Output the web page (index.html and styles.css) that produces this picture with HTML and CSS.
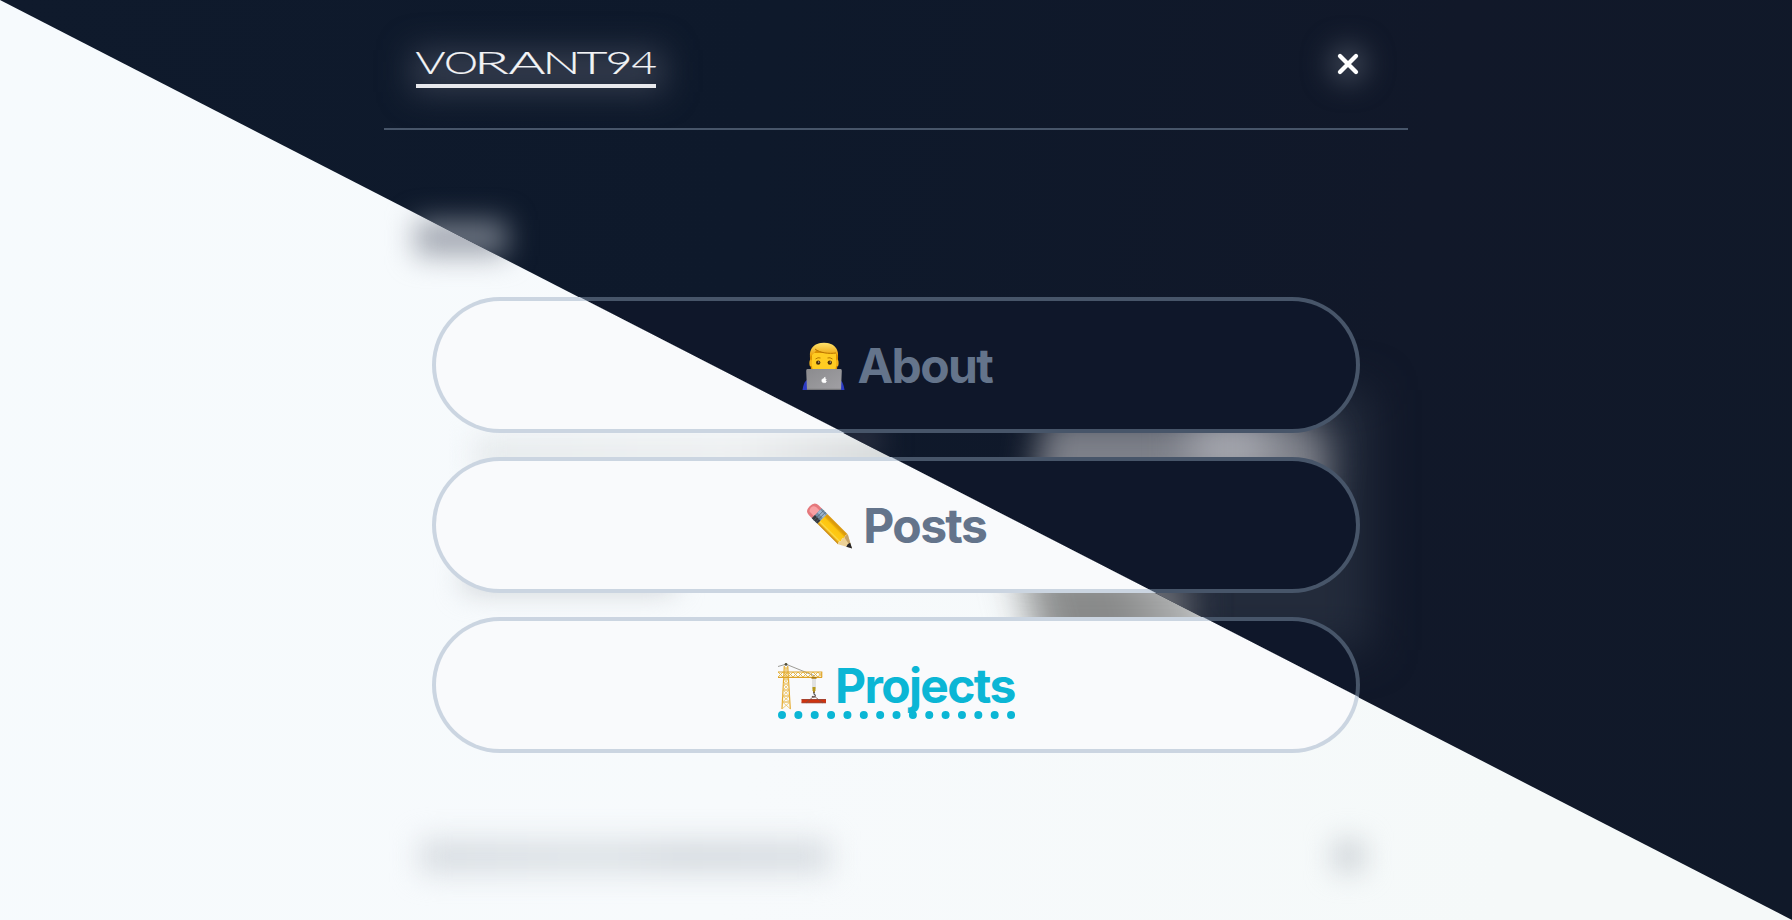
FILE: index.html
```html
<!DOCTYPE html>
<html lang="en">
<head>
<meta charset="utf-8">
<title>VORANT94</title>
<link rel="stylesheet" href="styles.css">
</head>
<body>
<div class="backdrop light">
  <i class="blob title"></i>
  <i class="blob card"></i>
  <i class="blob card-top"></i>
  <i class="blob photo"></i>
  <i class="blob footer-text"></i>
  <i class="blob footer-icon"></i>
</div>
<div class="backdrop dark">
  <i class="blob logo-glow"></i>
  <i class="blob close-glow"></i>
  <i class="blob title"></i>
  <i class="blob edge"></i>
  <i class="blob card-end"></i>
  <i class="blob photo-top"></i>
  <i class="blob photo-shine"></i>
  <i class="blob photo-low"></i>
</div>
<div class="page">
  <header class="header">
    <a class="logo">
      <svg width="240" height="25" viewBox="0 0 240 25"><text class="wordmark" y="23.200"><tspan x="-.5" textLength="30" lengthAdjust="spacingAndGlyphs">V</tspan><tspan x="28" textLength="34" lengthAdjust="spacingAndGlyphs">O</tspan><tspan x="58" textLength="35" lengthAdjust="spacingAndGlyphs">R</tspan><tspan x="92.500" textLength="37" lengthAdjust="spacingAndGlyphs">A</tspan><tspan x="126.500" textLength="38" lengthAdjust="spacingAndGlyphs">N</tspan><tspan x="160.500" textLength="31" lengthAdjust="spacingAndGlyphs">T</tspan><tspan x="189.500" textLength="27" lengthAdjust="spacingAndGlyphs">9</tspan><tspan x="215.500" textLength="25.500" lengthAdjust="spacingAndGlyphs">4</tspan></text></svg>
    </a>
    <button class="close" aria-label="Close">
      <svg width="32" height="32" viewBox="0 0 32 32"><path d="M8 8 24 24M24 8 8 24"/></svg>
    </button>
  </header>
  <nav class="nav">
    <a class="item"><span class="label">
      <svg class="emoji" width="48" height="48" viewBox="0 0 48 48">
        <defs>
          <linearGradient id="hair" x1="0" y1="0" x2="0" y2="1"><stop offset="0" stop-color="#ffe36b"/><stop offset="1" stop-color="#e99a00"/></linearGradient>
          <linearGradient id="lap" x1="0" y1="0" x2="1" y2="1"><stop offset="0" stop-color="#8b8b8e"/><stop offset="1" stop-color="#a1a0a4"/></linearGradient>
        </defs>
        <path d="M2.500 48c1-6 2-9 6-11h30c4 2 5 5 6 11z" fill="#2c3bc4"/>
        <path d="M10 18C9 7 15 1 24 1s15 6 14 17l-1 9H11z" fill="#dc9100"/>
        <ellipse cx="10.800" cy="21" rx="1.400" ry="3.600" fill="#f5b416"/><ellipse cx="37.200" cy="21" rx="1.400" ry="3.600" fill="#f5b416"/>
        <path d="M12 11h24v13c0 6-5 9-12 9s-12-3-12-9z" fill="#ffcc22"/>
        <path d="M10 15C9 6 15 .8 24 .8S39 6 38 15l-2-4c-7 1-15 0-20-3-1 3-3 4-6 7z" fill="url(#hair)"/>
        <path d="M15 7c5 4 14 5 21 4" fill="none" stroke="#b87300" stroke-width="1"/>
        <path d="M15.500 17q2.500-2 5-1M27.500 16q2.500-1 5 1" fill="none" stroke="#b97900" stroke-width="1"/>
        <ellipse cx="18.200" cy="20.600" rx="2.200" ry="2.200" fill="#4d3008"/><ellipse cx="29.800" cy="20.600" rx="2.200" ry="2.200" fill="#4d3008"/>
        <circle cx="18.700" cy="20" r=".6" fill="#fff"/><circle cx="30.300" cy="20" r=".6" fill="#fff"/>
        <path d="M7.500 27h33q1.500 0 1.300 2L41 48H7L6.200 29Q6 27 7.500 27z" fill="url(#lap)"/>
        <path d="M7 46.800h34V48H7z" fill="#77777a"/>
        <path transform="translate(6 10) scale(.75)" d="M24.200 36c1.300-.8 2.600-.2 2.700.4-1.300.8-1 2.400.2 2.800-.8 1.900-1.800 1.900-2.900 1.400-1.500.8-3.100-.6-3-2.700.1-2 1.700-2.700 3-1.900zM24.200 35.500q0-1.500 1.300-1.900 0 1.500-1.300 1.900z" fill="#fff" stroke="#fff"/>
      </svg><span>About</span></span></a>
    <a class="item"><span class="label">
      <svg class="emoji" width="48" height="48" viewBox="0 0 48 48">
        <defs><linearGradient id="pencil" x1="0" y1="0" x2="0" y2="1"><stop offset="0" stop-color="#dc9a16"/><stop offset=".14" stop-color="#d99a0c"/><stop offset=".26" stop-color="#ecac08"/><stop offset=".34" stop-color="#fcc510"/><stop offset=".7" stop-color="#ffc914"/><stop offset=".76" stop-color="#ffe04a"/><stop offset=".88" stop-color="#e5a818"/><stop offset="1" stop-color="#c17d08"/></linearGradient></defs>
        <g transform="translate(6.500 7) rotate(45)">
          <path d="M2-7h4.500v14H2q-6 0-6-7t6-7z" fill="#e5787c"/>
          <path d="M1-4q-3 1-3 4 0 3 2 4h6v-8z" fill="#f8a0a3"/>
          <path d="M6-7h8V7H6z" fill="#728ca3"/><path d="M6-5h8v4H6z" fill="#9db6cf"/><path d="M6 2.500h8V7H6z" fill="#38393c"/>
          <path d="M9-7V7M11.500-7V7" stroke="#50616f" stroke-width=".7"/>
          <path d="M14-7h29q-2 2.300 0 4.700-2 2.300 0 4.600-2 2.400 0 4.700H14z" fill="url(#pencil)"/>
          <path d="M43-7 55.500 0 43 7q-2-2.300 0-4.700-2-2.300 0-4.600-2-2.400 0-4.700z" fill="#edd196"/>
          <path d="M43-7 55.500 0 43-2.300q-1.500-2.500 0-4.700z" fill="#c5a267"/>
          <path d="M50.500-2.800 56 0l-5.500 2.800q-1.500-2.800 0-5.600z" fill="#27272b"/>
        </g>
      </svg><span>Posts</span></span></a>
    <a class="item"><span class="label active">
      <svg class="emoji" width="48" height="48" viewBox="0 0 48 48" fill="none">
        <path d="M0 4.500 8 2.200 37 14" stroke="#85837b" stroke-width=".8"/>
        <path d="M6.300 4 4 47M9.700 4 12.300 47M6.500 6h3M6 11h4M5.500 17h5M5 22h6M4.800 28h6.400M4.500 34h7M4.200 40h7.600" stroke="#e4aa2e" stroke-width="1.200"/>
        <path d="M6 5l4 6-4.500 6 5.500 5-6 6 6.500 6-7 6 8 7M10 5l-4 6 4.500 6-5.500 5 6.200 6-6.700 6 7.500 6-8 7" stroke="#edc35c" stroke-width=".8"/>
        <path d="M0 10h44M0 15.300h44M43.700 9.500v6" stroke="#dda127" stroke-width="1.200"/>
        <path d="M0 10l5 5 5-5 5 5 5-5 5 5 5-5 5 5 5-5 4 5M0 15l5-5 5 5 5-5 5 5 5-5 5 5 5-5 5 5 4-5" stroke="#e7b338" stroke-width=".9"/>
        <path d="M33.500 15.800h5M36 28v3" stroke="#a97810" stroke-width="1.800"/><path d="M35 17v10M37 17v10" stroke="#bbb" stroke-width=".8"/>
        <path d="M36 25v4" stroke="#b6991c" stroke-width="3"/>
        <path d="M36 30v2q2 1 1 2.500t-3-.2" stroke="#555" stroke-width="1.200"/>
        <path d="M23.500 37.500h24.500v3.300H23.500z" fill="#ce330f"/><path d="M23.500 37.500H48M23.500 40.800H48" stroke="#982b16" stroke-width=".8"/>
        <path d="M36 34 28 41M36 34 45 41" stroke="#795048" stroke-width=".8"/>
        <circle cx="8" cy="2.400" r="1.400" fill="#555038"/>
      </svg><span>Projects</span>
      <svg class="dots" width="237" height="8" viewBox="0 0 237 8"><path d="M4 4h229.100"/></svg></span></a>
  </nav>
</div>
</body>
</html>
```
FILE: styles.css
```css
* { box-sizing: border-box; }
body {
  margin: 0;
  height: 920px;
  overflow: hidden;
  font-family: Inter, "Liberation Sans", sans-serif;
}
.backdrop { position: absolute; inset: 0; overflow: hidden; }
.light { background: linear-gradient(100deg, #f6fafd 0%, #f7fafc 45%, #f5f9f9 85%); }
.dark {
  background: linear-gradient(100deg, #0f1a2c 0%, #0e192b 40%, #111829 75%, #101929 100%);
  clip-path: polygon(0 0, 100% 0, 100% 100%);
}
/* Out-of-focus shapes of the page that lies behind the menu */
.blob { position: absolute; filter: blur(14px); }
.title { left: 415px; top: 220px; width: 92px; height: 36px; }
.light .title { background: #a3a8b2; }
.dark .title { background: #6d7582; }
.card { left: 464px; top: 566px; width: 210px; height: 24px; background: #c8ccd0; }
.card-top { left: 474px; top: 436px; width: 436px; height: 40px; background: linear-gradient(90deg, #e6eaec, #eceeef 60%, #cfd2d3); }
.card-end { left: 840px; top: 425px; width: 42px; height: 30px; background: #2c3142; }
.photo { left: 1030px; top: 560px; width: 190px; height: 110px; background: linear-gradient(90deg, #8f9191, #858686 45%, #c5c7c8); filter: blur(20px); transform: skewX(14deg); }
.footer-text { left: 420px; top: 840px; width: 410px; height: 33px; background: linear-gradient(90deg, #d7dce1, #dde2e6 45%, #d5dadf 65%, #d9dee3); }
.footer-icon { left: 1334px; top: 841px; width: 29px; height: 30px; background: #cacfd4; }
.logo-glow { left: 412px; top: 50px; width: 252px; height: 42px; background: #343c4d; filter: blur(16px); }
.close-glow { left: 1330px; top: 46px; width: 36px; height: 36px; background: #424a59; border-radius: 50%; filter: blur(14px); }
.edge { left: 1190px; top: 390px; width: 180px; height: 260px; background: #232b3b; filter: blur(22px); }
.photo-top { left: 1036px; top: 416px; width: 292px; height: 110px; background: #7d8089; border-radius: 0 50px 0 0; filter: blur(17px); transform: skewX(-8deg); transform-origin: right; }
.photo-shine { left: 1190px; top: 430px; width: 80px; height: 34px; background: #b8b9c0; filter: blur(20px); }
.photo-low { left: 1040px; top: 570px; width: 150px; height: 70px; background: #6b6e76; filter: blur(18px); }

.page { position: relative; width: 1024px; margin: 0 auto; }
.header {
  height: 130px;
  padding: 0 44px 0 32px;
  display: flex;
  align-items: center;
  justify-content: space-between;
  border-bottom: 2px solid #475569;
}
.logo { width: 240px; height: 37px; margin-top: 11px; border-bottom: 4px solid #e8e9ed; }
.logo svg { display: block; overflow: visible; }
.wordmark { font: 300 30.500px Lato, sans-serif; fill: #f3f4f6; stroke: #f3f4f6; stroke-width: .2; }
.close { width: 32px; height: 32px; padding: 0; border: 0; background: none; }
.close svg { display: block; fill: none; stroke: #fff; stroke-width: 4.300; stroke-linecap: round; }
.nav { padding: 167px 48px 0; display: flex; flex-direction: column; gap: 24px; }
.item {
  height: 136px;
  display: flex;
  align-items: center;
  justify-content: center;
  border: 4px solid transparent;
  border-radius: 68px;
  background:
    linear-gradient(to top right, #f9fafc 50%, #0f172a calc(50% + 1px)) fixed padding-box,
    linear-gradient(to top right, #cbd5e1 50%, #475569 calc(50% + 1px)) fixed border-box;
}
.label {
  position: relative;
  height: 60px;
  display: flex;
  align-items: center;
  gap: 9.500px;
  color: #64748b;
  font-size: 48px;
  font-weight: 650;
  line-height: 60px;
  letter-spacing: -1.650px;
}
.label span { padding-top: 2px; }
.emoji { display: block; overflow: visible; margin-top: 1px; }
.active { width: 237px; color: #0bb6d5; }
.dots { position: absolute; left: 0; top: 56px; }
.dots path { fill: none; stroke: #0bb6d5; stroke-width: 8; stroke-linecap: round; stroke-dasharray: 0 16.360; }
```
